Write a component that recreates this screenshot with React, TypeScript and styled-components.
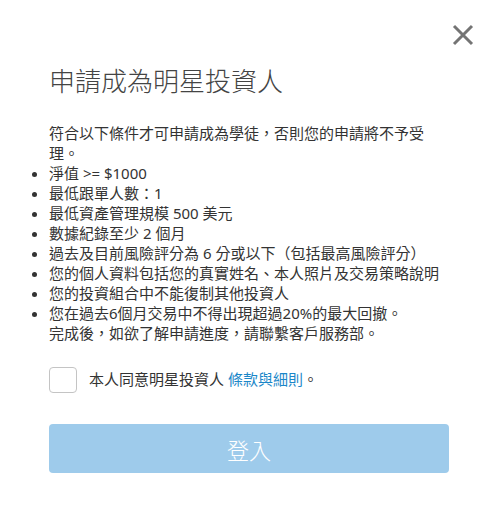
import React from "react";
import styled, { createGlobalStyle } from "styled-components";

const Global = createGlobalStyle`
  html, body { margin: 0; padding: 0; background: #fff; }
  body { font-family: "Noto Sans", "Noto Sans CJK TC", sans-serif; }
`;

const Modal = styled.div`
  width: 497px;
  height: 523px;
  box-sizing: border-box;
  padding: 0 48px 0 49px;
  display: flex;
  flex-direction: column;
  background: #fff;
`;

const CloseRow = styled.div`
  display: flex;
  justify-content: flex-end;
  padding-top: 24px;
  margin-right: -25px;
  height: 22px;
`;

const CloseButton = styled.button`
  width: 22px;
  height: 22px;
  padding: 0;
  border: none;
  background: transparent;
  cursor: pointer;
  display: flex;
  align-items: center;
  justify-content: center;
`;

const Title = styled.h1`
  margin: 14px 0 0;
  font-family: "Noto Sans CJK TC", sans-serif;
  font-weight: 300;
  font-size: 26px;
  line-height: 40px;
  color: #444;
`;

const Body = styled.div`
  margin-top: 23px;
  font-size: 15px;
  line-height: 20px;
  color: #333;
`;

const Para = styled.p`
  margin: 0;
`;

const List = styled.ul`
  margin: 0;
  padding: 0;
  list-style: disc outside;
`;

const Item = styled.li`
  margin: 0;
`;

const AgreeRow = styled.label`
  margin-top: 24px;
  display: flex;
  align-items: flex-start;
  gap: 12px;
  font-size: 15px;
  line-height: 20px;
  color: #333;
`;

const Box = styled.span`
  width: 28px;
  height: 26px;
  box-sizing: border-box;
  border: 1px solid #c4c4c4;
  border-radius: 4px;
  flex: none;
  background: #fff;
`;

const LabelText = styled.span`
  padding-top: 2px;
`;

const Link = styled.a`
  color: #1b87c9;
  text-decoration: none;
`;

const Submit = styled.button`
  margin-top: 31px;
  width: 400px;
  height: 49px;
  border: none;
  border-radius: 4px;
  background: #9ecbeb;
  color: #fff;
  font-family: "Noto Sans CJK TC", sans-serif;
  font-size: 22px;
  font-weight: 300;
  cursor: default;
`;

export default function App() {
  return (
    <>
      <Global />
      <Modal>
        <CloseRow>
          <CloseButton aria-label="close">
            <svg width="22" height="22" viewBox="0 0 22 22">
              <path d="M2 2 L20 20 M20 2 L2 20" stroke="#747474" strokeWidth="3" strokeLinecap="butt" />
            </svg>
          </CloseButton>
        </CloseRow>
        <Title>申請成為明星投資人</Title>
        <Body>
          <Para>符合以下條件才可申請成為學徒，否則您的申請將不予受理。</Para>
          <List>
            <Item>淨值 &gt;= $1000</Item>
            <Item>最低跟單人數：1</Item>
            <Item>最低資產管理規模 500 美元</Item>
            <Item>數據紀錄至少 2 個月</Item>
            <Item>過去及目前風險評分為 6 分或以下（包括最高風險評分）</Item>
            <Item>您的個人資料包括您的真實姓名、本人照片及交易策略說明</Item>
            <Item>您的投資組合中不能復制其他投資人</Item>
            <Item>您在過去6個月交易中不得出現超過20%的最大回撤。</Item>
          </List>
          <Para>完成後，如欲了解申請進度，請聯繫客戶服務部。</Para>
        </Body>
        <AgreeRow>
          <Box />
          <LabelText>
            本人同意明星投資人 <Link href="#">條款與細則</Link>。
          </LabelText>
        </AgreeRow>
        <Submit>登入</Submit>
      </Modal>
    </>
  );
}
